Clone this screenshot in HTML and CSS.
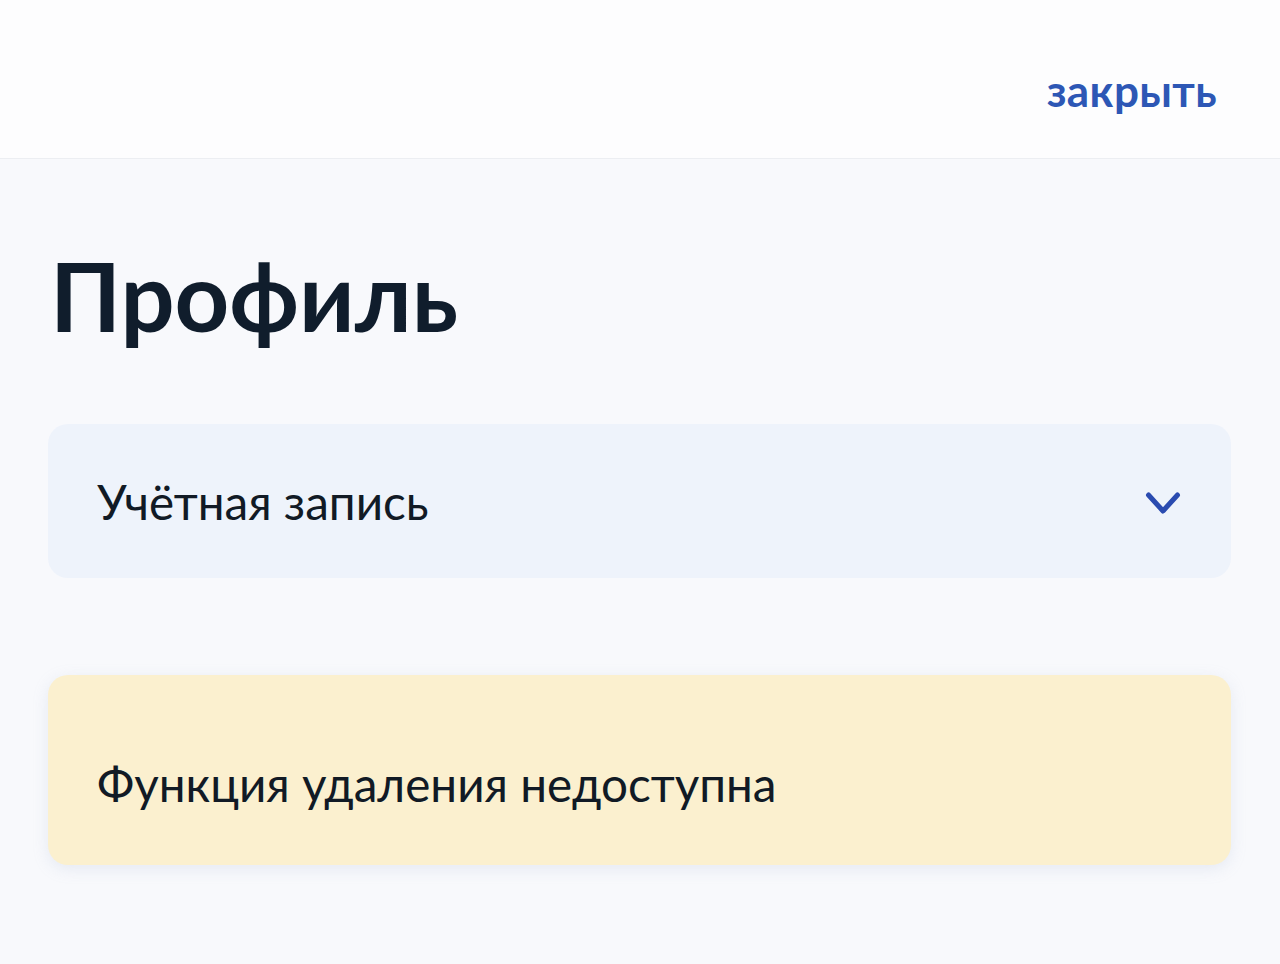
FILE: index.html
```html
<!DOCTYPE html>
<html lang="ru">
<head>
<meta charset="utf-8">
<link rel="stylesheet" href="styles.css">
</head>
<body>
<header class="topbar">
  <a class="close-link" href="#">закрыть</a>
</header>
<main class="content">
  <h1 class="title">Профиль</h1>
  <section class="accordion">
    <span class="accordion-label">Учётная запись</span>
    <svg class="chevron" width="40" height="26" viewBox="0 0 40 26" aria-hidden="true">
      <path d="M5.5 5 L20 21 L34.5 5" fill="none" stroke="#2a4bb0" stroke-width="5" stroke-linecap="round" stroke-linejoin="round"/>
    </svg>
  </section>
  <section class="notice">
    <p class="notice-text">Функция удаления недоступна</p>
  </section>
</main>
</body>
</html>
```

FILE: styles.css
```css
html, body {
  margin: 0;
  padding: 0;
}
body {
  background: #f8f9fc;
  font-family: Lato, "Noto Sans", sans-serif;
  min-height: 964px;
}
.topbar {
  height: 158px;
  background: #fdfdfe;
  border-bottom: 1px solid #eceef2;
  display: flex;
  align-items: center;
  justify-content: flex-end;
  padding: 0 63px 0 0;
}
.close-link {
  font-size: 44px;
  font-weight: 700;
  color: #2d57b5;
  text-decoration: none;
  letter-spacing: 0.4px;
  margin-top: 22px;
}
.content {
  padding: 0 49px 0 48px;
}
.title {
  margin: 89px 0 0 2px;
  font-size: 95.4px;
  line-height: 1;
  font-weight: 700;
  color: #101d2c;
}
.accordion {
  margin-top: 81px;
  height: 154px;
  border-radius: 20px;
  background: #eef3fb;
  display: flex;
  align-items: center;
  justify-content: space-between;
  padding: 0 48px 0 49px;
}
.accordion-label {
  font-size: 47.6px;
  color: #111a25;
}
.chevron {
  display: block;
  margin-top: 4px;
}
.notice {
  margin-top: 97px;
  height: 190px;
  border-radius: 20px;
  background: #fbf0cf;
  box-shadow: 0 4px 16px rgba(150, 165, 200, 0.18);
  display: flex;
  align-items: center;
  padding: 0 49px;
}
.notice-text {
  margin: 27px 0 0 0;
  font-size: 47.6px;
  color: #111a25;
}
```
